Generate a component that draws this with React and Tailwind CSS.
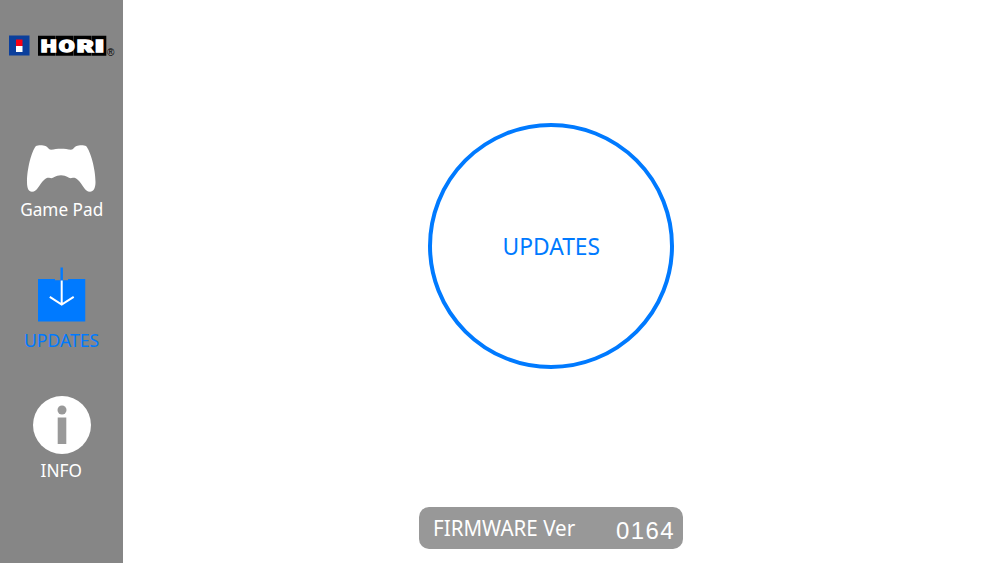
import { useState } from "react";

const ACTIVE = "text-[#007aff]";

const LOGO_LETTERS = [
  { char: "H", x: 32, width: 15.5 },
  { char: "O", x: 50, width: 15.5 },
  { char: "R", x: 68, width: 16.5 },
  { char: "I", x: 86, width: 9 },
];

function HoriLogo() {
  return (
    <svg width="106" height="22" viewBox="0 0 106 22" role="img" aria-label="HORI">
      <rect x="0" y="0.5" width="20.5" height="20" fill="#0b3f9c" />
      <rect x="7" y="4.5" width="6.5" height="6.5" fill="#fb0013" />
      <rect x="7" y="11" width="6.5" height="6" fill="#fff" />
      <path d="M29 0.7h17v20H29zM46.4 0.7h17.800v20H46.400zM64.600 0.7h17.800v20h-17.800zM82.800 0.7h14.500v20H82.800z" fill="#000" />
      {LOGO_LETTERS.map(({ char, x, width }) => (
        <text
          key={char}
          x={x}
          y="16.6"
          textLength={width}
          lengthAdjust="spacingAndGlyphs"
          fill="#fff"
          stroke="#fff"
          strokeWidth="1.5"
          fontFamily="Roboto, sans-serif"
          fontWeight="900"
          fontSize="16.8"
        >
          {char}
        </text>
      ))}
      <text x="98" y="20.6" fontFamily="'Liberation Sans', sans-serif" fontSize="10">
        ®
      </text>
    </svg>
  );
}

function GamePadIcon() {
  return (
    <svg width="71" height="48" viewBox="0 0 71 48" fill="#fff">
      <path d="M10 1C12 0 17 0 19.500 1C21.500 1.800 22.500 4.400 25 4.800C31 3.300 39 3.300 45 4.800C47.500 4.400 48.500 1.800 50.500 1C53 0 58 0 60 1C64.500 6 69.500 24 69.500 37C69.500 43 67.500 46.800 64 46.800C58.500 46.800 57 39.500 52 35C50 33 48 32.600 46 33C42.500 34 41.500 30.200 35 30.200C28.500 30.200 27.500 34 24 33C22 32.600 20 33 18 35C13 39.500 11.500 46.800 6 46.800C2.500 46.800 1 43 1 37C1 24 5.500 6 10 1Z" />
    </svg>
  );
}

function UpdatesIcon() {
  return (
    <svg width="48" height="55" viewBox="0 0 48 55" fill="none" className="translate-x-[0.5px]">
      <path d="M0.500 12h17v1.300h13V12H48v42.500H0.500z" fill="#007aff" />
      <path d="M24.200 0.500v13" stroke="#007aff" strokeWidth="2.400" />
      <path d="M24.200 13.500v24M12.300 29.800l11.900 7.700 12-7.700" stroke="#fff" strokeWidth="2" />
    </svg>
  );
}

function InfoIcon() {
  return (
    <svg width="58" height="58" viewBox="0 0 58 58">
      <circle cx="29" cy="29" r="29" fill="#fff" />
      <circle cx="29" cy="14" r="4.500" fill="#999" />
      <rect x="24.700" y="21.500" width="8.600" height="26.500" fill="#999" />
    </svg>
  );
}

function NavItem({ icon, label, active, onClick, className, labelClass }) {
  return (
    <button onClick={onClick} className={`flex flex-col items-center ${className}`}>
      {icon}
      <span
        className={`text-[18.5px] leading-6 whitespace-nowrap ${labelClass} ${active ? ACTIVE : "text-white"}`}
      >
        {label}
      </span>
    </button>
  );
}

export default function App() {
  const [page, setPage] = useState("updates");

  return (
    <div className="flex w-full h-[563px] overflow-hidden bg-white font-['Noto_Sans',sans-serif]">
      <aside className="w-[123px] shrink-0 bg-[#868686] flex flex-col items-center pt-[35px]">
        <HoriLogo />
        <NavItem
          icon={<GamePadIcon />}
          label="Game Pad"
          active={page === "gamepad"}
          onClick={() => setPage("gamepad")}
          className="mt-[88px]"
          labelClass="mt-1 scale-x-[0.93]"
        />
        <NavItem
          icon={<UpdatesIcon />}
          label="UPDATES"
          active={page === "updates"}
          onClick={() => setPage("updates")}
          className="mt-[46px]"
          labelClass="mt-1.5 scale-x-[0.95]"
        />
        <NavItem
          icon={<InfoIcon />}
          label="INFO"
          active={page === "info"}
          onClick={() => setPage("info")}
          className="mt-[44px]"
          labelClass="mt-1 scale-x-[0.93]"
        />
      </aside>

      <main className="flex-1 flex flex-col items-center pr-[21px] pt-[123px]">
        <button className="size-[246px] shrink-0 rounded-full border-4 border-[#007aff] text-[#007aff] text-2xl flex items-center justify-center">
          <span className="scale-x-[0.95]">UPDATES</span>
        </button>
        <div className="mt-[138px] w-[264px] h-[42px] rounded-[10px] bg-[#989898] text-white flex items-center justify-between pl-3.5 pr-2">
          <span className="text-[22px] leading-none origin-left scale-x-[0.935] whitespace-nowrap pb-0.5">
            FIRMWARE Ver
          </span>
          <span className="font-['Liberation_Sans',sans-serif] text-[24px] leading-none tracking-[1.4px] pt-1.5">
            0164
          </span>
        </div>
      </main>
    </div>
  );
}
